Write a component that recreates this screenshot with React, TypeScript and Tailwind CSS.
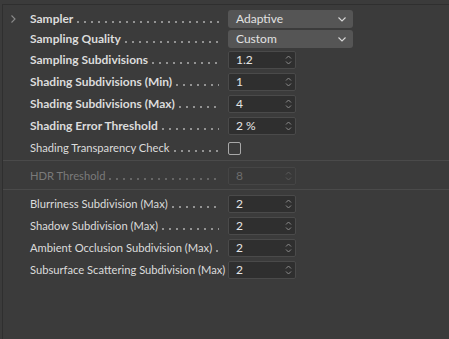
import React from "react";

type Row =
  | { kind: "select"; label: string; value: string; bold?: boolean }
  | { kind: "spin"; label: string; value: string; bold?: boolean; disabled?: boolean }
  | { kind: "check"; label: string; bold?: boolean };

function Spinner({ dim }: { dim?: boolean }) {
  return (
    <svg width="7" height="12" viewBox="0 0 7 12" className="shrink-0">
      <path
        d="M1 4.5 L3.5 2 L6 4.5 M1 7.5 L3.5 10 L6 7.5"
        fill="none"
        stroke={dim ? "#5a5a5a" : "#8c8c8c"}
        strokeWidth="1"
      />
    </svg>
  );
}

// label followed by leader dots up to the value column
function Label({ text, bold, disabled }: { text: string; bold?: boolean; disabled?: boolean }) {
  return (
    <div className="flex w-[198px] shrink-0 items-baseline whitespace-nowrap">
      <span
        className={`shrink-0 ${bold ? "text-[12px] font-bold" : "text-[11.2px] font-normal"} ${
          disabled ? "text-[#7a7a7a]" : "text-[#dcdcdc]"
        }`}
      >
        {text}
      </span>
      <div
        className={`ml-[3px] mr-[9px] h-[2px] min-w-0 flex-1 bg-[length:7px_2px] bg-repeat-x ${
          disabled
            ? "bg-[radial-gradient(circle_at_2px_1px,#666666_0.8px,transparent_1.1px)]"
            : "bg-[radial-gradient(circle_at_2px_1px,#939393_0.8px,transparent_1.1px)]"
        }`}
      />
    </div>
  );
}

function Field({ row }: { row: Row }) {
  if (row.kind === "select") {
    return (
      <div className="flex h-[18px] w-[125px] items-center justify-between rounded-[3px] bg-[#555555] pl-[8px] pr-[7px] text-[12px] text-[#e2e2e2]">
        <span>{row.value}</span>
        <svg width="8" height="5" viewBox="0 0 8 5">
          <path d="M0.5 0.5 L4 4 L7.5 0.5" fill="none" stroke="#d8d8d8" strokeWidth="1.1" />
        </svg>
      </div>
    );
  }
  if (row.kind === "check") {
    return <div className="h-[13px] w-[13px] rounded-[2px] border border-[#a8a8a8]" />;
  }
  return (
    <div
      className={`flex h-[18px] w-[68px] items-center justify-between rounded-[2px] border pl-[7px] pr-[3px] text-[12px] ${
        row.disabled
          ? "border-[#454545] bg-[#393939] text-[#6c6c6c]"
          : "border-[#4a4a4a] bg-[#2f2f2f] text-[#e6e6e6]"
      }`}
    >
      <span>{row.value}</span>
      <Spinner dim={row.disabled} />
    </div>
  );
}

function PropRow({ row, first, h = 22 }: { row: Row; first?: boolean; h?: number }) {
  const disabled = row.kind === "spin" && row.disabled;
  return (
    <div className={`flex items-center ${h === 20 ? "h-[20px]" : "h-[22px]"}`}>
      <div className="flex w-[27px] shrink-0 pl-[8px]">
        {first && (
          <svg width="5" height="8" viewBox="0 0 5 8">
            <path d="M0.5 0.5 L4 4 L0.5 7.5" fill="none" stroke="#8a8a8a" strokeWidth="1.1" />
          </svg>
        )}
      </div>
      <Label text={row.label} bold={row.bold} disabled={disabled} />
      <Field row={row} />
    </div>
  );
}

const top: Row[] = [
  { kind: "spin", label: "Sampling Subdivisions", value: "1.2", bold: true },
  { kind: "spin", label: "Shading Subdivisions (Min)", value: "1", bold: true },
  { kind: "spin", label: "Shading Subdivisions (Max)", value: "4", bold: true },
  { kind: "spin", label: "Shading Error Threshold", value: "2 %", bold: true },
  { kind: "check", label: "Shading Transparency Check" },
];

const bottom: Row[] = [
  { kind: "spin", label: "Blurriness Subdivision (Max)", value: "2" },
  { kind: "spin", label: "Shadow Subdivision (Max)", value: "2" },
  { kind: "spin", label: "Ambient Occlusion Subdivision (Max)", value: "2" },
  { kind: "spin", label: "Subsurface Scattering Subdivision (Max)", value: "2" },
];

export default function App() {
  return (
    <div className="h-[339px] w-[449px] overflow-hidden bg-[#3b3b3b] font-['Lato',sans-serif] leading-[14px]">
      <div className="ml-[2px] h-full border-l border-[#2f2f2f]">
        <div className="mt-[4px] h-px bg-[#2f2f2f]" />
        <div className="pt-[4px]">
          <PropRow row={{ kind: "select", label: "Sampler", value: "Adaptive", bold: true }} first h={20} />
          <PropRow row={{ kind: "select", label: "Sampling Quality", value: "Custom", bold: true }} h={20} />
          {top.map((r) => (
            <PropRow key={r.label} row={r} />
          ))}
        </div>
        <div className="mt-px h-px bg-[#4a4a4a]" />
        <div className="mt-[4px]">
          <PropRow row={{ kind: "spin", label: "HDR Threshold", value: "8", disabled: true }} />
        </div>
        <div className="mt-[2px] h-px bg-[#4a4a4a]" />
        <div className="mt-[3px]">
          {bottom.map((r) => (
            <PropRow key={r.label} row={r} />
          ))}
        </div>
      </div>
    </div>
  );
}
